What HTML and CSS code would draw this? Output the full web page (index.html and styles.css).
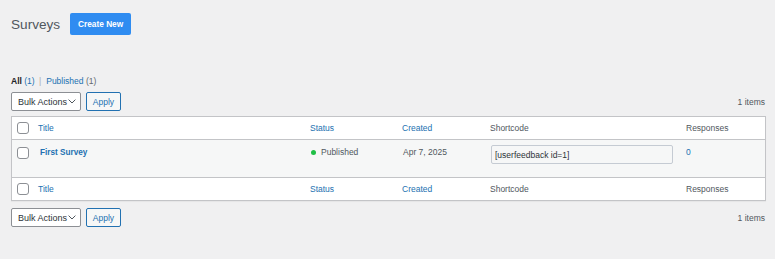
FILE: index.html
```html
<!DOCTYPE html>
<html lang="en">
<head>
    <meta charset="UTF-8">
    <meta name="viewport" content="width=device-width, initial-scale=1.0">
    <title>Surveys</title>
    <link rel="stylesheet" href="styles.css">
</head>
<body>

<div class="wrap">
    <div class="page-header">
        <h1>Surveys</h1>
        <button class="create-btn">Create New</button>
    </div>

    <ul class="subsubsub">
        <li><a class="current" href="#">All <span class="count-blue">(1)</span></a> <span class="sep">|</span></li>
        <li><a href="#">Published</a> <span class="count">(1)</span></li>
    </ul>

    <div class="tablenav">
        <div class="actions">
            <div class="select">
                Bulk Actions
                <svg width="8" height="5" viewBox="0 0 8 5"><path d="M0.6 0.6 L4 4 L7.4 0.6" fill="none" stroke="#50575e" stroke-width="1"/></svg>
            </div>
            <button class="apply-btn">Apply</button>
        </div>
        <span class="num-items">1 items</span>
    </div>

    <div class="list-table">
        <div class="row head">
            <div class="cell check"><span class="checkbox"></span></div>
            <div class="cell"><a href="#">Title</a></div>
            <div class="cell"><a href="#">Status</a></div>
            <div class="cell"><a href="#">Created</a></div>
            <div class="cell plain">Shortcode</div>
            <div class="cell plain">Responses</div>
        </div>
        <div class="row body">
            <div class="cell check"><span class="checkbox"></span></div>
            <div class="cell"><a class="row-title" href="#">First Survey</a></div>
            <div class="cell status"><span class="dot"></span>Published</div>
            <div class="cell muted">Apr 7, 2025</div>
            <div class="cell"><input class="shortcode" type="text" value="[userfeedback id=1]" readonly></div>
            <div class="cell"><a href="#">0</a></div>
        </div>
        <div class="row foot">
            <div class="cell check"><span class="checkbox"></span></div>
            <div class="cell"><a href="#">Title</a></div>
            <div class="cell"><a href="#">Status</a></div>
            <div class="cell"><a href="#">Created</a></div>
            <div class="cell plain">Shortcode</div>
            <div class="cell plain">Responses</div>
        </div>
    </div>

    <div class="tablenav bottom">
        <div class="actions">
            <div class="select">
                Bulk Actions
                <svg width="8" height="5" viewBox="0 0 8 5"><path d="M0.6 0.6 L4 4 L7.4 0.6" fill="none" stroke="#50575e" stroke-width="1"/></svg>
            </div>
            <button class="apply-btn">Apply</button>
        </div>
        <span class="num-items">1 items</span>
    </div>
</div>

</body>
</html>
```

FILE: styles.css
```css
/* Global Styles */
body {
    font-family: 'Liberation Sans', Arial, sans-serif;
    font-size: 8.5px;
    margin: 0;
    padding: 0;
    background: #f0f0f1;
    color: #3c434a;
}

a {
    color: #2271b1;
    text-decoration: none;
}

.wrap {
    padding: 13px 9px 0 11px;
}

.page-header {
    display: flex;
    align-items: center;
    gap: 10px;
    height: 22px;
}

h1 {
    margin: 0;
    font-size: 13.6px;
    font-weight: 400;
    color: #50575e;
    line-height: 22px;
    padding-top: 2px;
}

.create-btn {
    font-family: inherit;
    background: #2f8cf1;
    color: #fff;
    border: none;
    border-radius: 2px;
    height: 22px;
    width: 61px;
    padding: 0;
    font-size: 8.3px;
    font-weight: bold;
}

.subsubsub {
    list-style: none;
    margin: 40px 0 0;
    padding: 0;
    display: flex;
    gap: 3px;
    line-height: 12px;
    color: #646970;
}

.subsubsub .current {
    color: #1d2327;
    font-weight: bold;
}

.subsubsub .count-blue {
    color: #2271b1;
    font-weight: normal;
}

.subsubsub .sep {
    color: #a7aaad;
    margin: 0 2px;
}

.tablenav {
    display: flex;
    justify-content: space-between;
    align-items: center;
    height: 19px;
    margin-top: 5px;
}

.tablenav.bottom {
    margin-top: 7px;
}

.actions {
    display: flex;
    gap: 5px;
}

.select {
    box-sizing: border-box;
    width: 70px;
    height: 19px;
    border: 1px solid #8c8f94;
    border-radius: 2px;
    background: #fff;
    color: #2c3338;
    font-size: 9px;
    display: flex;
    align-items: center;
    justify-content: space-between;
    padding: 0 4px 0 6px;
}

.apply-btn {
    font-family: inherit;
    box-sizing: border-box;
    height: 19px;
    width: 35px;
    padding: 0;
    border: 1px solid #2271b1;
    border-radius: 2px;
    background: #f6f7f7;
    color: #2271b1;
    font-size: 8.5px;
}

.num-items {
    color: #50575e;
    padding-right: 1px;
}

.list-table {
    margin-top: 5px;
    border: 1px solid #c3c4c7;
    background: #fff;
    box-shadow: 0 1px 1px rgba(0, 0, 0, 0.04);
}

.row {
    display: grid;
    grid-template-columns: 26px 272px 92px 88px 196px 1fr;
}

.row.head,
.row.foot {
    height: 22px;
    align-items: center;
}

.row.head {
    border-bottom: 1px solid #c3c4c7;
}

.row.foot {
    border-top: 1px solid #c3c4c7;
}

.row.body {
    height: 37px;
    background: #f6f7f7;
    align-items: start;
}

.cell.plain {
    color: #50575e;
}

.row.body .cell {
    padding-top: 6px;
    line-height: 12px;
}

.row.body .cell.check {
    padding-top: 7px;
}

.checkbox {
    display: block;
    box-sizing: border-box;
    width: 12px;
    height: 12px;
    margin-left: 5px;
    border: 1px solid #8c8f94;
    border-radius: 3px;
    background: #fff;
}

.row-title {
    font-weight: bold;
    font-size: 8.2px;
    padding-left: 2px;
}

.status {
    display: flex;
    align-items: center;
    color: #50575e;
}

.dot {
    width: 5px;
    height: 5px;
    border-radius: 50%;
    background: #1fbf45;
    margin: 0 5px 0 1px;
}

.muted {
    color: #50575e;
    padding-left: 1px;
}

.row.body .cell .shortcode {
    display: block;
    box-sizing: border-box;
    width: 182px;
    height: 19px;
    margin: -1px 0 0 1px;
    padding: 0 3px;
    border: 1px solid #c5cbd3;
    border-radius: 2px;
    background: #f6f7f7;
    color: #2c3338;
    font-family: inherit;
    font-size: 8.5px;
}
```
